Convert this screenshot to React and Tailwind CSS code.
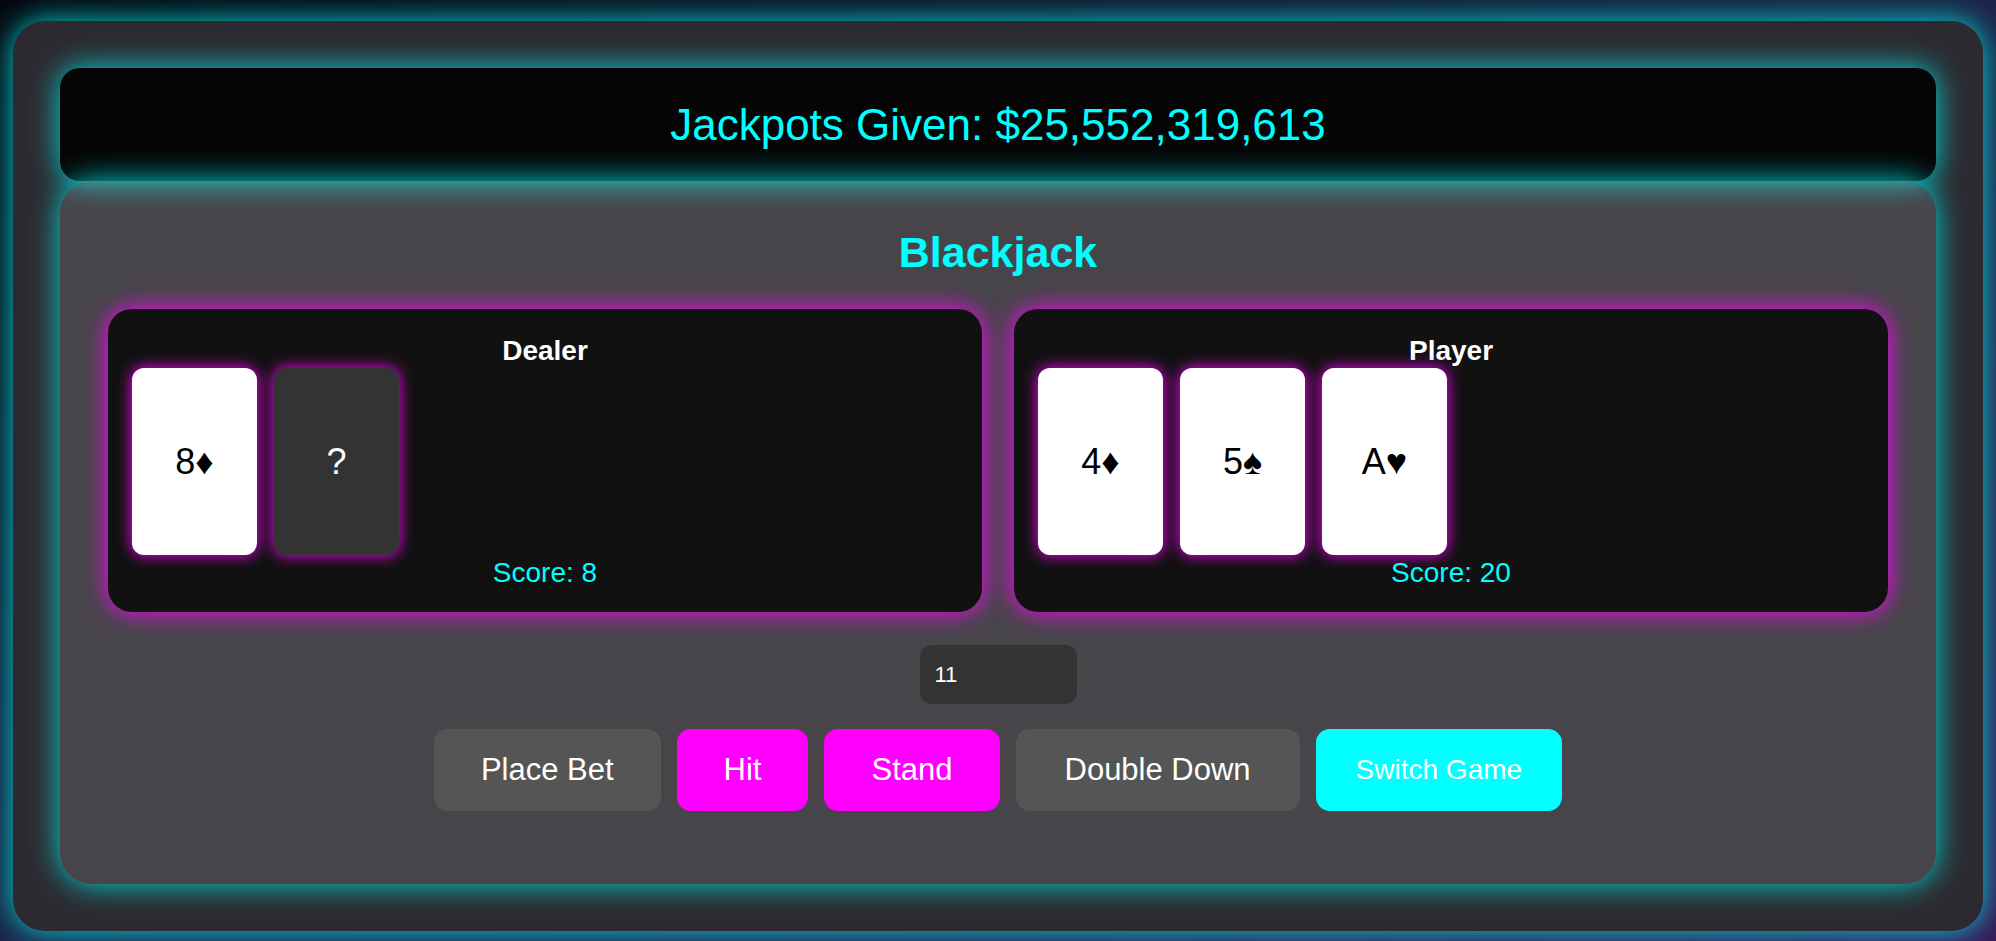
import React, { useState } from 'react';

const dealerCards = [{ label: '8♦' }, { label: '?', hidden: true }];
const playerCards = [{ label: '4♦' }, { label: '5♠' }, { label: 'A♥' }];

function Card({ label, hidden }) {
  return (
    <div
      className={`w-[125px] h-[187px] rounded-[12px] flex items-center justify-center text-[36px] shadow-[0_0_15px_#ff00ff] ${
        hidden ? 'bg-[#333333] text-white' : 'bg-white text-black'
      }`}
    >
      {label}
    </div>
  );
}

function Hand({ title, cards, score }) {
  return (
    <div className="flex-1 bg-[#111111] rounded-[24px] pt-[26px] pb-[23px] px-[24px] shadow-[0_0_25px_#ff00ff]">
      <h3 className="text-center text-white font-bold text-[28px] leading-[32px]">{title}</h3>
      <div className="flex gap-[17px] mt-[1px]">
        {cards.map((c, i) => (
          <Card key={i} {...c} />
        ))}
      </div>
      <p className="text-center text-[#00ffff] text-[28px] leading-[32px] mt-[2px]">Score: {score}</p>
    </div>
  );
}

export default function App() {
  const [bet, setBet] = useState('11');

  const btn = 'h-[82px] rounded-[14px] text-white flex items-center justify-center';

  return (
    <div
      className="min-h-[941px] pt-[21px] px-[13px] pb-[10px] bg-gradient-to-br from-[#05070f] via-[#1c2448] to-[#3a1656]"
      style={{ fontFamily: '"Liberation Sans", Arial, sans-serif' }}
    >
      <div className="bg-[#2c2a30] rounded-[32px] p-[47px] shadow-[0_0_30px_#00d8d8]">
        {/* Jackpot banner */}
        <div className="h-[113px] bg-[#050505] rounded-[20px] flex items-center justify-center shadow-[0_0_30px_#00d8d8]">
          <span className="text-[44px] text-[#00ffff]">Jackpots Given: $25,552,319,613</span>
        </div>

        {/* Game area */}
        <div className="bg-[rgba(255,255,255,0.13)] rounded-[32px] pt-[46px] pb-[73px] px-[48px] shadow-[0_0_30px_#00d8d8]">
          <h2 className="text-center text-[#00ffff] font-bold text-[43px] leading-[50px] mb-[32px]">Blackjack</h2>

          <div className="flex gap-[32px]">
            <Hand title="Dealer" cards={dealerCards} score={8} />
            <Hand title="Player" cards={playerCards} score={20} />
          </div>

          <div className="flex justify-center mt-[33px]">
            <input
              value={bet}
              onChange={(e) => setBet(e.target.value)}
              className="w-[157px] h-[59px] rounded-[12px] bg-[#333333] text-white text-[22px] px-[15px] outline-none"
            />
          </div>

          <div className="flex justify-center gap-[16px] mt-[25px]">
            <button className={`${btn} bg-[#555555] px-[47px] text-[31px]`}>Place Bet</button>
            <button className={`${btn} bg-[#ff00ff] px-[47px] text-[31px]`}>Hit</button>
            <button className={`${btn} bg-[#ff00ff] px-[47px] text-[31px]`}>Stand</button>
            <button className={`${btn} bg-[#555555] px-[49px] text-[31px]`}>Double Down</button>
            <button className={`${btn} bg-[#00ffff] px-[40px] text-[28px]`}>Switch Game</button>
          </div>
        </div>
      </div>
    </div>
  );
}
